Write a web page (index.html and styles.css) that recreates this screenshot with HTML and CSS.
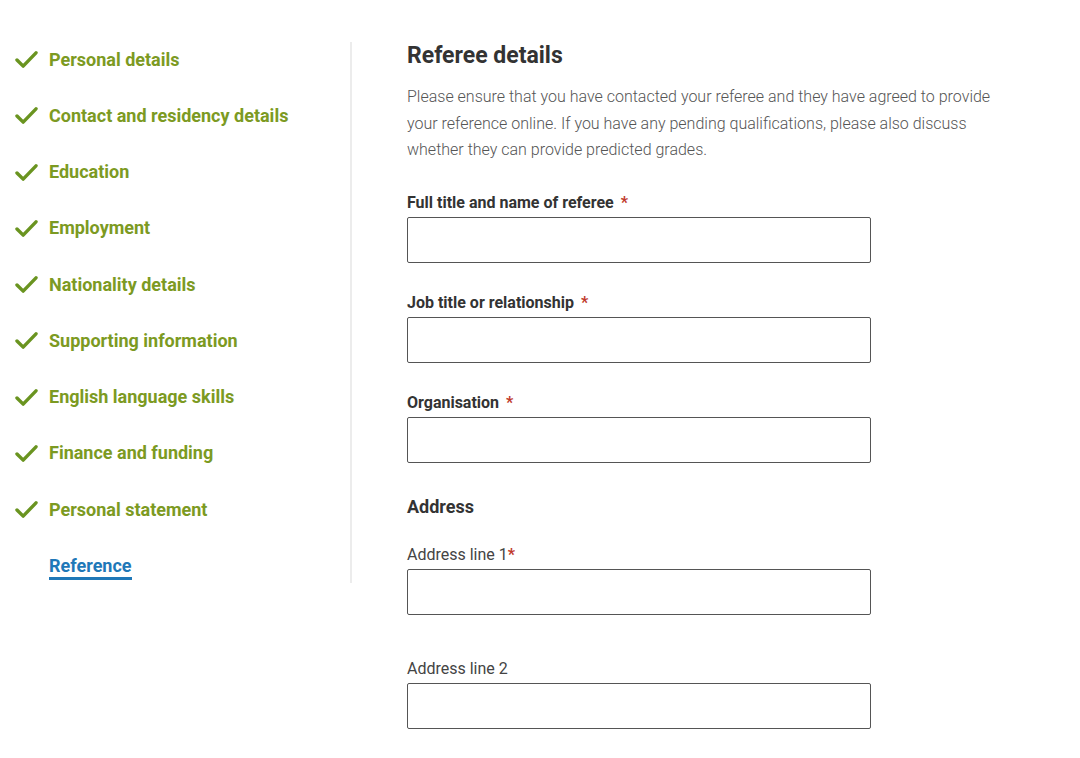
FILE: index.html
```html
<!DOCTYPE html>
<html lang="en">
<head>
    <meta charset="UTF-8">
    <meta name="viewport" content="width=device-width, initial-scale=1.0">
    <title>Referee details</title>
    <link rel="stylesheet" href="styles.css">
</head>
<body>
    <div class="page">
        <nav class="steps">
            <ul>
                <li class="step done"><svg class="tick" viewBox="0 0 24 20"><path d="M2 10.5 L8.5 17 L22 3"/></svg>Personal details</li>
                <li class="step done"><svg class="tick" viewBox="0 0 24 20"><path d="M2 10.5 L8.5 17 L22 3"/></svg>Contact and residency details</li>
                <li class="step done"><svg class="tick" viewBox="0 0 24 20"><path d="M2 10.5 L8.5 17 L22 3"/></svg>Education</li>
                <li class="step done"><svg class="tick" viewBox="0 0 24 20"><path d="M2 10.5 L8.5 17 L22 3"/></svg>Employment</li>
                <li class="step done"><svg class="tick" viewBox="0 0 24 20"><path d="M2 10.5 L8.5 17 L22 3"/></svg>Nationality details</li>
                <li class="step done"><svg class="tick" viewBox="0 0 24 20"><path d="M2 10.5 L8.5 17 L22 3"/></svg>Supporting information</li>
                <li class="step done"><svg class="tick" viewBox="0 0 24 20"><path d="M2 10.5 L8.5 17 L22 3"/></svg>English language skills</li>
                <li class="step done"><svg class="tick" viewBox="0 0 24 20"><path d="M2 10.5 L8.5 17 L22 3"/></svg>Finance and funding</li>
                <li class="step done"><svg class="tick" viewBox="0 0 24 20"><path d="M2 10.5 L8.5 17 L22 3"/></svg>Personal statement</li>
                <li class="step current"><span>Reference</span></li>
            </ul>
        </nav>

        <main class="form">
            <h1>Referee details</h1>
            <p class="intro">Please ensure that you have contacted your referee and they have agreed to provide your reference online. If you have any pending qualifications, please also discuss whether they can provide predicted grades.</p>

            <div class="field">
                <label class="label-strong">Full title and name of referee <span class="req">*</span></label>
                <input type="text">
            </div>
            <div class="field">
                <label class="label-strong">Job title or relationship <span class="req">*</span></label>
                <input type="text">
            </div>
            <div class="field">
                <label class="label-strong">Organisation <span class="req">*</span></label>
                <input type="text">
            </div>

            <h2>Address</h2>

            <div class="field">
                <label>Address line 1<span class="req">*</span></label>
                <input type="text">
            </div>
            <div class="field field-last">
                <label>Address line 2</label>
                <input type="text">
            </div>
        </main>
    </div>
</body>
</html>
```

FILE: styles.css
```css
body {
    font-family: Roboto, "Liberation Sans", Arial, sans-serif;
    margin: 0;
    background-color: #fff;
    color: #333;
}

.page {
    display: flex;
    align-items: flex-start;
}

.steps {
    width: 352px;
    margin-top: 42px;
    height: 541px;
    border-right: 2px solid #ececec;
    box-sizing: border-box;
}

.steps ul {
    list-style: none;
    margin: 0;
    padding: 6.5px 0 0 15px;
}

.step {
    display: flex;
    align-items: center;
    height: 22px;
    line-height: 22px;
    margin-bottom: 34.25px;
    font-size: 18px;
    font-weight: 700;
    color: #7c9a22;
}

.tick {
    width: 23px;
    height: 19px;
    margin-right: 11px;
    flex-shrink: 0;
}

.tick path {
    fill: none;
    stroke: #6a9420;
    stroke-width: 3.6;
    stroke-linecap: round;
    stroke-linejoin: round;
}

.step.current {
    align-items: flex-start;
    padding-left: 34px;
    color: #1f78b8;
}

.step.current span {
    display: block;
    border-bottom: 3px solid #1f78b8;
    line-height: 22px;
}

.form {
    padding: 42px 0 0 55px;
    width: 600px;
}

.form h1 {
    font-size: 23px;
    font-weight: 700;
    line-height: 28px;
    margin: 0 0 14px;
    color: #333;
}

.intro {
    font-size: 16px;
    font-weight: 300;
    line-height: 26.5px;
    color: #555;
    margin: 0 0 29px;
}

.field {
    display: flex;
    flex-direction: column;
    margin-bottom: 30px;
}

.field label {
    font-size: 16px;
    line-height: 20px;
    color: #444;
    margin-bottom: 4px;
}

.field label.label-strong {
    font-weight: 700;
    color: #333;
}

.req {
    color: #c0392b;
    font-weight: 700;
}

.label-strong .req {
    margin-left: 3px;
}

.field input {
    width: 464px;
    height: 46px;
    box-sizing: border-box;
    border: 1px solid #555;
    border-radius: 2px;
    background: #fff;
    margin: 0;
}

.form h2 {
    font-size: 18px;
    font-weight: 700;
    line-height: 24px;
    margin: 32px 0 26px;
    color: #333;
}

.field-last {
    margin-top: 44px;
}
```
